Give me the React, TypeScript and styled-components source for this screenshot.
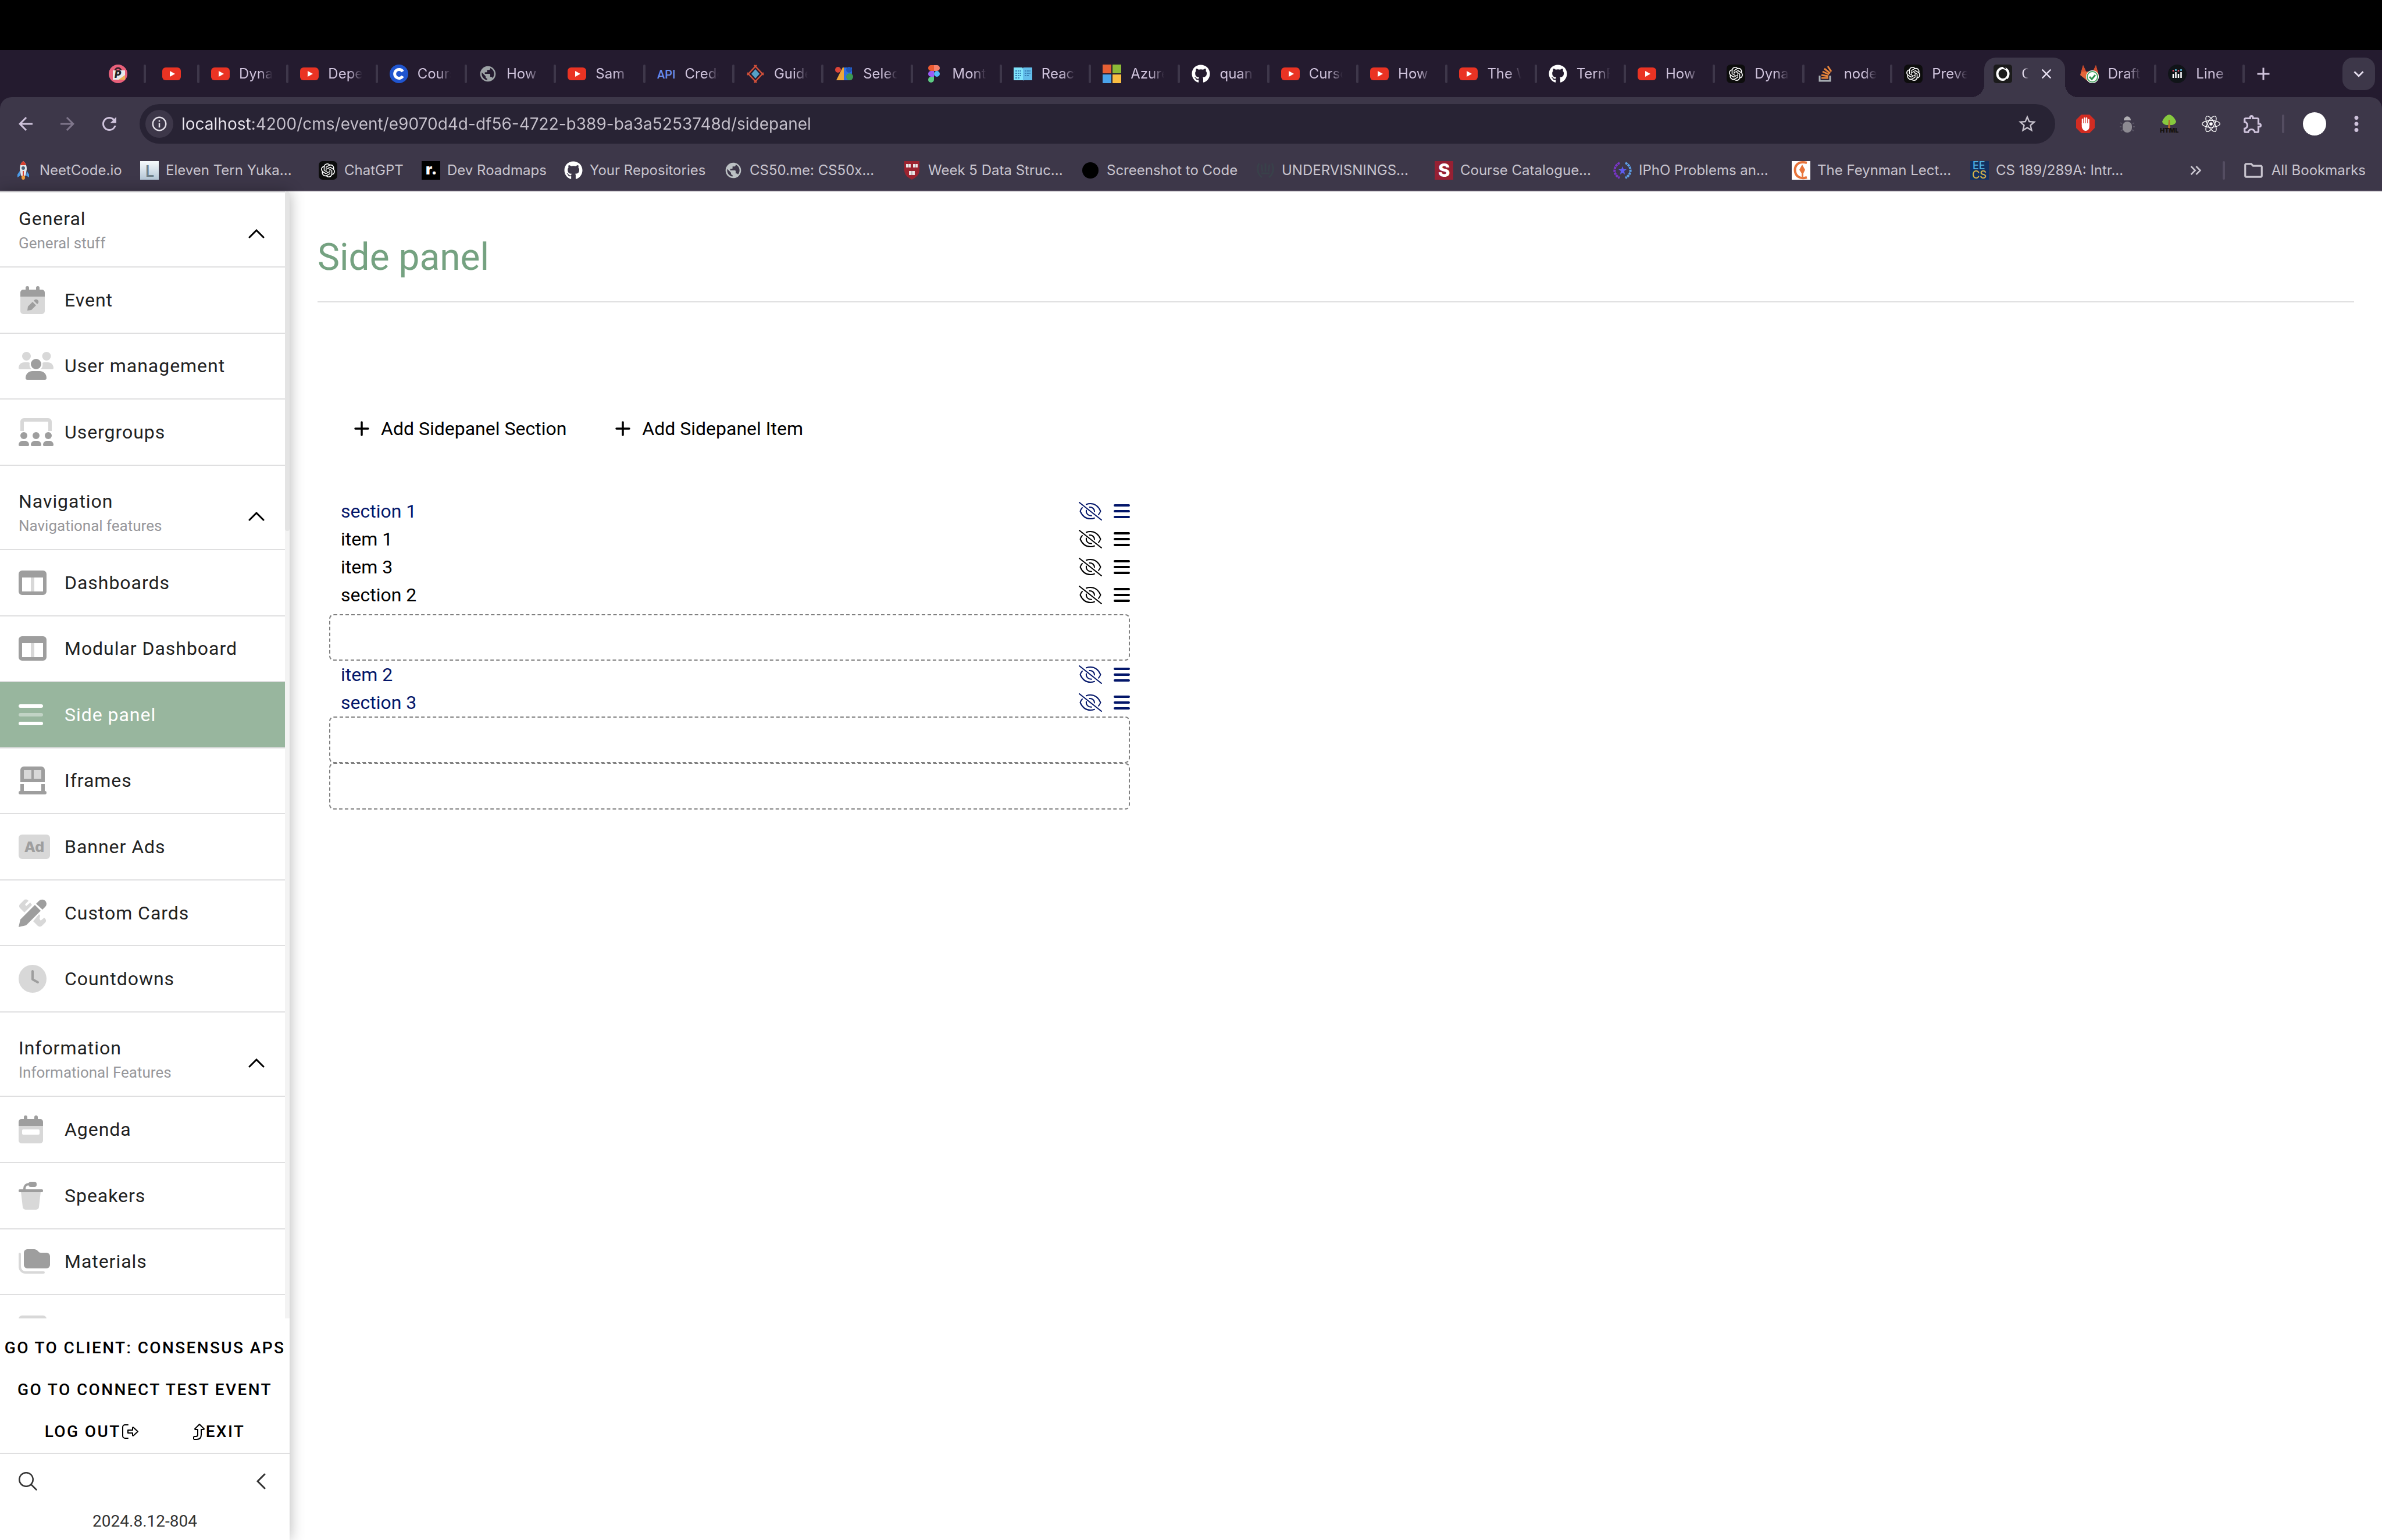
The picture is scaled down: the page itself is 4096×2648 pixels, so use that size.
import React from "react";
import styled, { createGlobalStyle, css } from "styled-components";
import { FaGithub, FaReact } from "react-icons/fa";
import { SiOpenai } from "react-icons/si";
import {
  MdPublic,
  MdArrowBack,
  MdArrowForward,
  MdRefresh,
  MdInfoOutline,
  MdStarBorder,
  MdOutlineExtension,
  MdMoreVert,
  MdClose,
  MdAdd,
  MdExpandMore,
  MdOutlineFolder,
  MdKeyboardDoubleArrowRight,
} from "react-icons/md";

const GlobalStyle = createGlobalStyle`
  * { box-sizing: border-box; }
  body { margin: 0; background: #fff; }
  button { border: 0; padding: 0; background: none; color: inherit; font: inherit; cursor: pointer; }
  a { color: inherit; text-decoration: none; }
  svg { display: block; flex: none; }
`;

const chromeFont = `Inter, "Liberation Sans", sans-serif`;
const appFont = `Roboto, "Liberation Sans", sans-serif`;

/* ---------- browser window ---------- */

const Window = styled.div`
  display: flex;
  flex-direction: column;
  height: 100vh;
  overflow: hidden;
`;

const MenuBar = styled.div`
  flex: none;
  height: 86px;
  background: #000;
`;

const TabStrip = styled.header`
  flex: none;
  display: flex;
  align-items: center;
  height: 81px;
  padding-left: 159px;
  padding-right: 12px;
  background: #241b2f;
  font: 400 24px/32px ${chromeFont};
  color: #cfc3dc;
`;

const tabSeparator = css`
  &::after {
    content: "";
    flex: none;
    width: 4px;
    height: 32px;
    border-radius: 2px;
    background: #3e374a;
  }
`;

const PinnedTab = styled.button`
  flex: none;
  display: flex;
  align-items: center;
  justify-content: space-between;
  width: 92px;
  padding-left: 28px;
  ${tabSeparator}
`;

const TabList = styled.div`
  flex: 1;
  min-width: 0;
  display: flex;
  align-items: center;
  align-self: stretch;
`;

const Tab = styled.button<{ $share: number; $separator: boolean }>`
  flex: ${(p) => p.$share} 1 0;
  min-width: 0;
  display: flex;
  align-items: center;
  padding-left: 20px;
  text-align: left;
  ${(p) => p.$separator && tabSeparator}
`;

const TabTitle = styled.span`
  flex: 1;
  min-width: 0;
  margin: 0 23px 0 16px;
  overflow: hidden;
  white-space: nowrap;
  mask-image: linear-gradient(90deg, #000 60%, transparent);
`;

const ActiveTab = styled.div`
  position: relative;
  flex: none;
  align-self: flex-end;
  display: flex;
  align-items: center;
  justify-content: space-between;
  width: 139px;
  height: 68px;
  margin: 0 6px;
  padding: 0 18px 12px 16px;
  border-radius: 20px 20px 0 0;
  background: #3d3749;
  color: #e6deef;
  &::before,
  &::after {
    content: "";
    position: absolute;
    bottom: 0;
    width: 22px;
    height: 22px;
  }
  &::before {
    right: 100%;
    background: radial-gradient(circle at 0 0, transparent 22px, #3d3749 22px);
  }
  &::after {
    left: 100%;
    background: radial-gradient(circle at 100% 0, transparent 22px, #3d3749 22px);
  }
`;

const ActiveTitle = styled.span`
  width: 12px;
  overflow: hidden;
  mask-image: linear-gradient(90deg, #000 30%, transparent);
`;

const NewTab = styled.button`
  flex: none;
  display: grid;
  place-items: center;
  width: 64px;
  height: 56px;
  margin-right: 104px;
`;

const TabSearch = styled.button`
  flex: none;
  display: grid;
  place-items: center;
  width: 56px;
  height: 56px;
  border-radius: 18px;
  background: #3d3749;
  color: #e6deef;
`;

const ToolbarArea = styled.div`
  background: #241b2f;
  flex: none;
`;

const Toolbar = styled.div`
  border-radius: 20px 20px 0 0;
  border-bottom: 2px solid #4d4658;
  background: #3d3749;
  font-family: ${chromeFont};
  color: #cfc3dc;
`;

const NavRow = styled.nav`
  display: flex;
  align-items: center;
  height: 92px;
  padding: 0 8px;
`;

const IconButton = styled.button<{ $faded?: boolean }>`
  flex: none;
  display: grid;
  place-items: center;
  width: 72px;
  height: 68px;
  opacity: ${(p) => (p.$faded ? 0.45 : 1)};
`;

const Omnibox = styled.form`
  flex: 1;
  display: flex;
  align-items: center;
  gap: 14px;
  height: 68px;
  margin: 0 16px;
  padding: 0 30px 0 10px;
  border-radius: 34px;
  background: #282334;
  color: #c6c1cc;
`;

const SiteInfo = styled.button`
  display: grid;
  place-items: center;
  width: 48px;
  height: 48px;
  border-radius: 24px;
  background: #3d3749;
  color: #e3dfe8;
`;

/* the host name is a shade brighter than the path after it */
const Address = styled.input`
  flex: 1;
  min-width: 0;
  border: 0;
  padding: 0;
  outline: 0;
  background: linear-gradient(90deg, #ebe7f0 121px, #c6c1cc 121px);
  background-clip: text;
  color: #c6c1cc;
  -webkit-text-fill-color: transparent;
  font: 400 28px/40px ${chromeFont};
`;

const Divider = styled.span`
  flex: none;
  width: 4px;
  height: 32px;
  border-radius: 2px;
  background: #544d61;
`;

const Avatar = styled.button`
  width: 40px;
  height: 40px;
  margin: 0 16px 0 32px;
  border-radius: 20px;
  background: #fff;
`;

const Profile = styled.div`
  display: flex;
  align-items: center;
  margin-left: 14px;
`;

const BookmarkBar = styled.div`
  display: flex;
  align-items: center;
  height: 68px;
  padding: 0 28px 0 24px;
  font-size: 24px;
  line-height: 32px;
  color: #c8c4ce;
`;

const Bookmark = styled.a<{ $width: number }>`
  flex: 0 0 ${(p) => p.$width}px;
  display: flex;
  align-items: center;
  gap: 12px;
  white-space: nowrap;
`;

const BookmarkEnd = styled.div`
  display: flex;
  align-items: center;
  gap: 30px;
  margin-left: auto;
`;

const AllBookmarks = styled.button`
  display: flex;
  align-items: center;
  gap: 12px;
`;

/* ---------- tab and bookmark pictures ---------- */

const YouTube = () => (
  <svg width="32" height="32" viewBox="0 0 32 32">
    <rect y="5" width="32" height="22" rx="6" fill="#ea3323" />
    <path d="M13 11l9 5-9 5z" fill="#fff" />
  </svg>
);

const ProductIcon = () => (
  <svg width="32" height="32" viewBox="0 0 32 32">
    <circle cx="16" cy="16" r="16" fill="#e8607a" />
    <path d="M11 11a5 5 0 0 1 10 0" fill="none" stroke="#33202a" strokeWidth="3" />
    <path d="M7 10h21v16H7z" fill="#e9e9e9" />
    <path d="M28 18v8H17z" fill="#efb054" />
    <text x="10" y="23" fontFamily="Inter, sans-serif" fontSize="17" fontWeight="900" fontStyle="italic" fill="#222">P</text>
  </svg>
);

const CourseraIcon = () => (
  <svg width="32" height="32" viewBox="0 0 32 32">
    <circle cx="16" cy="16" r="16" fill="#2055cf" />
    <path d="M22.500 12a7.500 7.500 0 1 0 0 8" fill="none" stroke="#fff" strokeWidth="5" />
  </svg>
);

const ApiIcon = () => (
  <svg width="32" height="32" viewBox="0 0 32 32">
    <text x="0" y="24" fontFamily="Roboto, sans-serif" fontSize="20" fontWeight="500" fill="#6a8cec">API</text>
  </svg>
);

const DiamondIcon = () => (
  <svg width="32" height="32" viewBox="0 0 32 32">
    <path d="M14 1l16 17M18 1L2 18M2 14l16 17M30 14L14 31" stroke="#d2503a" strokeWidth="2.500" />
    <path d="M16 8l7 8-7 8-7-8z" fill="#55a0c8" />
  </svg>
);

const AdsIcon = () => (
  <svg width="32" height="32" viewBox="0 0 32 32">
    <path d="M2 27L13 5h3v22z" fill="#eda63a" />
    <path d="M15 5h14v10l-4 12H15z" fill="#2f6fe0" />
    <circle cx="5" cy="9" r="5" fill="#db4437" />
    <circle cx="24" cy="9" r="5" fill="#1e55b8" />
    <circle cx="25" cy="21" r="6" fill="#3c9a53" />
  </svg>
);

const FigmaIcon = () => (
  <svg width="32" height="32" viewBox="0 0 32 32">
    <path d="M11 1h5v10h-5a5 5 0 0 1 0-10z" fill="#ec5b32" />
    <path d="M16 1h5a5 5 0 0 1 0 10h-5z" fill="#f5806b" />
    <path d="M11 11h5v10h-5a5 5 0 0 1 0-10z" fill="#9b5cf6" />
    <circle cx="21" cy="16" r="5" fill="#56b8f8" />
    <path d="M11 21h5v5a5 5 0 1 1-5-5z" fill="#5dcb83" />
  </svg>
);

const BookIcon = () => (
  <svg width="32" height="32" viewBox="0 0 32 32">
    <path d="M0 5h15l1 2v20H0z" fill="#7fe3fb" />
    <path d="M17 5h15v22H17l-1 1V6z" fill="#62bdea" />
    <path d="M3 11h10M3 15h10M3 19h10M3 23h8M19 11h10M19 15h10M19 19h8" stroke="#3b83b8" strokeWidth="2" strokeDasharray="3 1" />
  </svg>
);

const MicrosoftIcon = () => (
  <svg width="32" height="32" viewBox="0 0 32 32">
    <path d="M0 0h15v15H0z" fill="#e65f34" />
    <path d="M17 0h15v15H17z" fill="#8cb937" />
    <path d="M0 17h15v15H0z" fill="#4aa3ea" />
    <path d="M17 17h15v15H17z" fill="#f9bd42" />
  </svg>
);

const StackIcon = () => (
  <svg width="32" height="32" viewBox="0 0 32 32" fill="none" strokeWidth="3">
    <path d="M6 19v9h18v-9" stroke="#a9b0b5" />
    <path d="M9 23h12M9 18l12 2M11 12l11 5M14 7l10 8M20 3l6 9" stroke="#e8853b" />
  </svg>
);

const ChatBadge = styled.span`
  flex: none;
  display: grid;
  place-items: center;
  width: 32px;
  height: 32px;
  border-radius: 7px;
  background: #0d0d0d;
  color: #fff;
`;

const Chat = () => (
  <ChatBadge>
    <SiOpenai size={24} />
  </ChatBadge>
);

const ConsensusIcon = () => (
  <svg width="32" height="32" viewBox="0 0 32 32">
    <rect width="32" height="32" rx="5" fill="#1b1b1b" />
    <ellipse cx="16" cy="16" rx="9.500" ry="10" fill="none" stroke="#fff" strokeWidth="4" />
    <path d="M16 3l5 4M19 29l4-4" stroke="#1b1b1b" strokeWidth="2" />
  </svg>
);

const GitlabIcon = () => (
  <svg width="32" height="32" viewBox="0 0 32 32">
    <path d="M0 18L5 1l5 11h12l5-11 5 17-16 13z" fill="#e5663a" />
    <path d="M5 1l5 11H2zM27 1l-5 11h8z" fill="#d04a2c" />
    <circle cx="21" cy="21" r="11" fill="#fff" />
    <circle cx="21" cy="21" r="9" fill="#fff" stroke="#4aa564" strokeWidth="2" />
    <path d="M16 21l4 4 6-7" fill="none" stroke="#2f8f4d" strokeWidth="3" />
  </svg>
);

const BarsIcon = () => (
  <svg width="32" height="32" viewBox="0 0 32 32">
    <circle cx="16" cy="16" r="16" fill="#101418" />
    <path d="M9 16v7M13.500 13v10M18 16v7M22.500 13v10" stroke="#fff" strokeWidth="2.500" />
    <path d="M9 9v3M18 9v3" stroke="#d9536b" strokeWidth="2.500" />
    <path d="M13.500 8v3M22.500 8v3" stroke="#59b7d8" strokeWidth="2.500" />
  </svg>
);

const RocketIcon = () => (
  <svg width="32" height="32" viewBox="0 0 32 32">
    <path d="M10 17l-4 6v5l5-3zM22 17l4 6v5l-5-3z" fill="#4b9be8" />
    <ellipse cx="16" cy="28" rx="3" ry="4" fill="#f3a03b" />
    <path d="M16 0c5 4 6 9 6 14l-2 11h-8l-2-11c0-5 1-10 6-14z" fill="#e3e7ec" />
    <path d="M16 0c3 2 4 4 5 7H11c1-3 2-5 5-7zM15 17h2v9h-2z" fill="#d8412f" />
    <circle cx="16" cy="12" r="3" fill="#4a6378" />
  </svg>
);

const LetterL = () => (
  <svg width="32" height="32" viewBox="0 0 32 32">
    <defs>
      <linearGradient id="ice" x2="0" y2="1">
        <stop stopColor="#f6fafc" />
        <stop offset="1" stopColor="#b4c6d6" />
      </linearGradient>
    </defs>
    <rect width="32" height="32" fill="url(#ice)" />
    <text x="9" y="27" fontFamily="Inter, sans-serif" fontSize="27" fontWeight="600" fill="#6f7f88">L</text>
  </svg>
);

const RoadmapIcon = () => (
  <svg width="32" height="32" viewBox="0 0 32 32">
    <rect width="32" height="32" fill="#000" />
    <text x="7" y="23" fontFamily="Inter, sans-serif" fontSize="26" fontWeight="900" fill="#fff">r.</text>
  </svg>
);

const ShieldIcon = () => (
  <svg width="32" height="32" viewBox="0 0 32 32">
    <path d="M3 0h26v15c0 9-6 13-13 17C9 28 3 24 3 15z" fill="#9c2430" />
    <path d="M6 5h8v6H6zM18 5h8v6h-8zM11 17h10v7H11z" fill="#ece6e6" />
    <path d="M10 5v6M22 5v6M16 17v7" stroke="#8b8080" strokeWidth="1" />
  </svg>
);

const BlackDot = () => (
  <svg width="32" height="32" viewBox="0 0 32 32">
    <circle cx="16" cy="16" r="14" fill="#000" />
  </svg>
);

const DarkCrest = () => (
  <svg width="32" height="32" viewBox="0 0 32 32" fill="none" stroke="#39414a" strokeWidth="3">
    <path d="M5 4c-4 8-3 18 5 24M27 4c4 8 3 18-5 24M9 6l2 12M16 4v14M23 6l-2 12M9 21h14" />
  </svg>
);

const LetterS = () => (
  <svg width="32" height="32" viewBox="0 0 32 32">
    <rect width="32" height="32" fill="#972033" />
    <text x="6" y="27" fontFamily="Inter, sans-serif" fontSize="31" fontWeight="800" fill="#fff">S</text>
  </svg>
);

const LaurelIcon = () => (
  <svg width="32" height="32" viewBox="0 0 32 32">
    <path d="M11 3C1 8-2 22 11 29" fill="none" stroke="#7a35c8" strokeWidth="4" strokeDasharray="4 1" />
    <path d="M21 3c10 5 13 19 0 26" fill="none" stroke="#5d9fe6" strokeWidth="4" strokeDasharray="4 1" />
    <path d="M16 9l2 5h5l-4 3 1 6-4-3-4 3 1-6-4-3h5z" fill="#5e5cf0" />
  </svg>
);

const FeynmanIcon = () => (
  <svg width="32" height="32" viewBox="0 0 32 32">
    <rect width="32" height="32" fill="#fff" />
    <path d="M26 3C10-1 4 9 6 19c2 9 11 12 20 9" fill="none" stroke="#e8743b" strokeWidth="4" />
    <path d="M18 6l5 9-3 6v6h-3v-6l-4-6z" fill="#e8743b" />
  </svg>
);

const EecsIcon = () => (
  <svg width="32" height="32" viewBox="0 0 32 32">
    <rect width="32" height="32" fill="#12305f" />
    <text x="4" y="14" fontFamily="Inter, sans-serif" fontSize="18" fontWeight="500" fill="#4fb3e2">EE</text>
    <text x="3" y="30" fontFamily="Inter, sans-serif" fontSize="18" fontWeight="500" fill="#d8b54a">CS</text>
  </svg>
);

const StopHand = () => (
  <svg width="32" height="32" viewBox="0 0 32 32">
    <path d="M9 0h14l9 9v14l-9 9H9l-9-9V9z" fill="#d22c22" />
    <path d="M11 17V8M14.500 16V6M18 16V6M21.500 18V9" stroke="#fff" strokeWidth="2.500" strokeLinecap="round" />
    <path d="M9.750 15h13v6c0 4-3 7-6.500 7s-6.500-4-6.500-8z" fill="#fff" />
  </svg>
);

const BugIcon = () => (
  <svg width="32" height="32" viewBox="0 0 32 32">
    <path d="M10 10c0-9 12-9 12 0z" fill="#b0aeb3" />
    <rect x="8" y="12" width="16" height="19" rx="8" fill="#8d8a92" />
    <path d="M4 14l3 2M28 14l-3 2M3 21h3M29 21h-3M5 28l3-2M27 28l-3-2" stroke="#5a5565" strokeWidth="2" />
  </svg>
);

const TreeIcon = () => (
  <svg width="32" height="32" viewBox="0 0 32 32">
    <path d="M16 0c5 1 9 5 12 12-1 4-5 6-9 6h-6c-4 0-8-2-9-6C7 5 11 1 16 0z" fill="#86c93e" />
    <path d="M15 9h2l1 15h-4z" fill="#b06c2c" />
    <text x="0" y="31" fontFamily="Inter, sans-serif" fontSize="11" fontWeight="900" fill="#16120e">HTML</text>
  </svg>
);

/* ---------- application ---------- */

const Page = styled.div`
  flex: 1;
  min-height: 0;
  display: flex;
  font: 400 32px/40px ${appFont};
  color: #000;
  background: #fff;
`;

const Sidebar = styled.aside`
  flex: none;
  display: flex;
  flex-direction: column;
  width: 498px;
  background: #fff;
  box-shadow: 0 0 24px rgba(0, 0, 0, 0.3);
`;

const ScrollArea = styled.div`
  flex: 1;
  min-height: 0;
  display: flex;
`;

const Menu = styled.nav`
  flex: 1;
  overflow: hidden;
  border-top: 2px solid #dfdfe0;
  letter-spacing: 0.03em;
  color: #212121;
`;

const ScrollTrack = styled.div`
  width: 8px;
  background: #f3f3f3;
`;

const ScrollThumb = styled.div`
  height: 584px;
  border-radius: 4px;
  background: #e4e4e4;
`;

const GroupHeader = styled.button<{ $compact: boolean }>`
  display: flex;
  align-items: flex-end;
  justify-content: space-between;
  width: 100%;
  height: ${(p) => (p.$compact ? 129 : 145)}px;
  padding: 0 35px 20px 32px;
  border-bottom: 2px solid #dfdfe0;
  text-align: left;
  letter-spacing: inherit;
`;

const GroupNames = styled.span`
  display: grid;
  gap: 2px;
`;

const GroupNote = styled.span`
  font-size: 26px;
  letter-spacing: 0;
  color: #97979b;
`;

const ChevronBox = styled.span`
  display: grid;
  place-items: center;
  height: 72px;
  color: #000;
`;

const GroupItems = styled.div<{ $height: number }>`
  display: grid;
  grid-auto-rows: 1fr;
  height: ${(p) => p.$height}px;
`;

const MenuLink = styled.a<{ $active?: boolean }>`
  display: flex;
  align-items: center;
  padding-left: 32px;
  border-bottom: 2px solid #dfdfe0;
  --dark: ${(p) => (p.$active ? "#fff" : "#9e9e9e")};
  --light: ${(p) => (p.$active ? "rgba(255,255,255,.4)" : "#d8d8d8")};
  background: ${(p) => (p.$active ? "#98b69e" : "#fff")};
  color: ${(p) => (p.$active ? "#fff" : "inherit")};
`;

const MenuIcon = styled.span<{ $centered?: boolean }>`
  flex: none;
  display: flex;
  width: 79px;
  padding-left: ${(p) => (p.$centered ? 3 : 0)}px;
`;

const SidebarFooter = styled.div`
  flex: none;
  padding: 15px 0 10px;
`;

const FooterRow = styled.div`
  display: flex;
  align-items: center;
  justify-content: center;
  gap: 94px;
  height: 72px;
`;

const FooterButton = styled.button`
  display: flex;
  align-items: center;
  gap: 2px;
  font-size: 28px;
  font-weight: 500;
  line-height: 40px;
  letter-spacing: 0.085em;
  text-transform: uppercase;
  white-space: nowrap;
`;

const SearchRow = styled.div`
  display: flex;
  align-items: center;
  justify-content: space-between;
  height: 96px;
  padding: 0 41px 0 32px;
  border-top: 2px solid #dfdfe0;
  color: #333;
`;

const Version = styled.div`
  font-size: 28px;
  line-height: 44px;
  text-align: center;
  color: #333;
`;

const Main = styled.main`
  flex: 1;
  min-width: 0;
  padding: 74px 48px 0;
`;

const Title = styled.h1`
  margin: 0;
  padding-bottom: 35px;
  border-bottom: 2px solid #dfdfe0;
  font-size: 64px;
  font-weight: 400;
  line-height: 80px;
  color: #75a281;
`;

const Actions = styled.div`
  display: flex;
  gap: 20px;
  margin-top: 197px;
  padding-left: 31px;
`;

const ActionButton = styled.button`
  display: flex;
  align-items: center;
  gap: 20px;
  padding: 0 32px;
`;

const PanelList = styled.section`
  display: flex;
  flex-direction: column;
  max-width: 1377px;
  margin: 98px 0 0 20px;
`;

const Entry = styled.div<{ $blue: boolean }>`
  display: flex;
  align-items: center;
  gap: 20px;
  height: 48px;
  padding-left: 20px;
  color: ${(p) => (p.$blue ? "#03166a" : "#000")};
`;

const EntryName = styled.span`
  flex: 1;
`;

const DropZone = styled.div<{ $spaced?: boolean }>`
  height: 80px;
  margin-top: ${(p) => (p.$spaced ? 9 : 0)}px;
  border: 2px dashed #808080;
  border-radius: 8px;
`;

/* duotone menu icons, one unit per pixel */

const D = "var(--dark)";
const L = "var(--light)";

const CalendarEdit = () => (
  <svg width="42" height="48" viewBox="0 0 42 48">
    <path d="M0 18h42v25a5 5 0 0 1-5 5H5a5 5 0 0 1-5-5z" fill={L} />
    <path d="M0 18v-7a5 5 0 0 1 5-5h4V3a3 3 0 0 1 6 0v3h12V3a3 3 0 0 1 6 0v3h4a5 5 0 0 1 5 5v7z" fill={D} />
    <path d="M12 42l1-7 8-8 6 6-8 8zM23 25l1-1a4 4 0 0 1 6 6l-1 1z" fill={D} />
  </svg>
);

const Users = () => (
  <svg width="60" height="48" viewBox="0 0 60 48">
    <g fill={L}>
      <circle cx="13.500" cy="7.500" r="7.500" />
      <circle cx="48" cy="7.500" r="7.500" />
      <path d="M2 30a2 2 0 0 1-2-2c0-6 4-10 10-10h5c2 0 3 0 4 1-1 4 0 8 3 11zM58 30a2 2 0 0 0 2-2c0-6-4-10-10-10h-5c-2 0-3 0-4 1 1 4 0 8-3 11z" />
    </g>
    <circle cx="30" cy="21" r="9" fill={D} />
    <path d="M12 45c0-7 5-12 12-12h12c7 0 12 5 12 12a3 3 0 0 1-3 3H15a3 3 0 0 1-3-3z" fill={D} />
  </svg>
);

const ScreenUsers = () => (
  <svg width="60" height="48" viewBox="0 0 60 48">
    <path d="M6 22V6a3 3 0 0 1 3-3h42a3 3 0 0 1 3 3v16" fill="none" stroke={L} strokeWidth="6" />
    {[9, 30, 51].map((x) => (
      <g key={x} fill={D}>
        <circle cx={x} cy="30" r="6" />
        <path d={`M${x - 9} 46c0-4 3-7 7-7h4c4 0 7 3 7 7a2 2 0 0 1-2 2h-14a2 2 0 0 1-2-2z`} />
      </g>
    ))}
  </svg>
);

const Columns = () => (
  <svg width="48" height="42" viewBox="0 0 48 42">
    <path d="M21 10h6v28h-6z" fill={L} />
    <path d="M6 0h36a6 6 0 0 1 6 6v30a6 6 0 0 1-6 6H6a6 6 0 0 1-6-6V6a6 6 0 0 1 6-6zM6 12v24h36V12z" fillRule="evenodd" fill={D} />
  </svg>
);

const Lines = () => (
  <svg width="42" height="36" viewBox="0 0 42 36">
    <rect width="42" height="6" rx="3" fill={D} />
    <rect y="15" width="42" height="6" rx="3" fill={L} />
    <rect y="30" width="42" height="6" rx="3" fill={D} />
  </svg>
);

const Frame = () => (
  <svg width="48" height="48" viewBox="0 0 48 48">
    <path d="M9 6h30v15H9z" fill={L} />
    <path d="M9 0h30a6 6 0 0 1 6 6v21H3V6a6 6 0 0 1 6-6zM9 6v15h13V6zM26 6v15h13V6z" fillRule="evenodd" fill={D} />
    <path d="M3 30h6v12h30V30h6v12a3 3 0 0 1 0 6H3a3 3 0 0 1 0-6z" fill={D} />
  </svg>
);

const Ad = () => (
  <svg width="54" height="42" viewBox="0 0 54 42">
    <rect width="54" height="42" rx="6" fill={L} />
    <text x="27" y="30" textAnchor="middle" fontFamily="Inter, sans-serif" fontSize="25" fontWeight="800" letterSpacing="0" fill={D}>Ad</text>
  </svg>
);

const PencilRuler = () => (
  <svg width="48" height="48" viewBox="0 0 48 48">
    <path d="M10 23L2 15a5 5 0 0 1 0-6l7-7a5 5 0 0 1 7 0l1 1-6 6 2 3 7-6 3 4zM25 38l10-12 2 2-1 6 2 3 6-5 2 2a5 5 0 0 1 0 6l-6 6a5 5 0 0 1-7 0z" fill={L} />
    <path d="M0 48l3-13L28 10l10 10-25 25zM30 8l5-5a8 8 0 0 1 11 0 8 8 0 0 1 0 10l-5 5z" fill={D} />
  </svg>
);

const Clock = () => (
  <svg width="48" height="48" viewBox="0 0 48 48">
    <circle cx="24" cy="24" r="24" fill={L} />
    <path d="M24 11v14l9 5" fill="none" stroke={D} strokeWidth="4" strokeLinecap="round" strokeLinejoin="round" />
  </svg>
);

const Calendar = () => (
  <svg width="42" height="48" viewBox="0 0 42 48">
    <path d="M0 18h42v25a5 5 0 0 1-5 5H5a5 5 0 0 1-5-5zM8 24a2 2 0 0 0-2 2v5a2 2 0 0 0 2 2h26a2 2 0 0 0 2-2v-5a2 2 0 0 0-2-2z" fillRule="evenodd" fill={L} />
    <path d="M0 18v-7a5 5 0 0 1 5-5h4V3a3 3 0 0 1 6 0v3h12V3a3 3 0 0 1 6 0v3h4a5 5 0 0 1 5 5v7z" fill={D} />
  </svg>
);

const Podium = () => (
  <svg width="42" height="48" viewBox="0 0 42 48">
    <path d="M4 17h34l-3 26a5 5 0 0 1-5 5H12a5 5 0 0 1-5-5z" fill={L} />
    <path d="M10 15v-3c0-5 3-8 8-8h3" fill="none" stroke={D} strokeWidth="4" />
    <rect x="17" width="14" height="9" rx="4" fill={D} />
    <rect y="13" width="42" height="5" rx="2" fill={D} />
  </svg>
);

const Folders = () => (
  <svg width="54" height="42" viewBox="0 0 54 42">
    <path d="M2 8v22a10 10 0 0 0 10 10h31" fill="none" stroke={L} strokeWidth="4" strokeLinecap="round" />
    <path d="M15 0h12c2 0 4 1 5 2l2 2c1 1 2 2 4 2h10a6 6 0 0 1 6 6v15a6 6 0 0 1-6 6H15a6 6 0 0 1-6-6V6a6 6 0 0 1 6-6z" fill={D} />
  </svg>
);

const Poll = () => (
  <svg width="48" height="42" viewBox="0 0 48 42">
    <rect width="48" height="42" rx="6" fill={L} />
  </svg>
);

const ChevronUp = () => (
  <svg width="28" height="16" viewBox="0 0 28 16">
    <path d="M2 14L14 2l12 12" fill="none" stroke="currentColor" strokeWidth="3" strokeLinecap="round" />
  </svg>
);

const ChevronLeft = () => (
  <svg width="16" height="28" viewBox="0 0 16 28">
    <path d="M14 2L2 14l12 12" fill="none" stroke="currentColor" strokeWidth="3" strokeLinecap="round" />
  </svg>
);

const Search = () => (
  <svg width="32" height="32" viewBox="0 0 32 32" fill="none" stroke="currentColor" strokeWidth="2.500" strokeLinecap="round">
    <circle cx="13" cy="13" r="11.750" />
    <path d="M21.500 21.500l9 9" />
  </svg>
);

const LogoutIcon = () => (
  <svg width="28" height="28" viewBox="0 0 28 28" fill="none" stroke="currentColor" strokeWidth="2" strokeLinecap="round" strokeLinejoin="round">
    <path d="M10 2H5a4 4 0 0 0-4 4v15a4 4 0 0 0 4 4h5" />
    <path d="M10 11h8V7c0-1 1-1 2 0l7 6.500-7 6.500c-1 1-2 1-2 0v-4h-8z" />
  </svg>
);

const LevelUp = () => (
  <svg width="20" height="28" viewBox="0 0 20 28" fill="none" stroke="currentColor" strokeWidth="2" strokeLinejoin="round">
    <path d="M11 1l8 8c0 1-1 1-1 1h-4v9c0 5-3 8-8 8H2l-1-1v-3l1-1h3c2 0 3-1 3-3v-9H4s-1 0-1-1z" />
  </svg>
);

const Plus = () => (
  <svg width="26" height="26" viewBox="0 0 26 26" stroke="currentColor" strokeWidth="3.500" strokeLinecap="round">
    <path d="M13 2v22M2 13h22" />
  </svg>
);

const EyeSlash = () => (
  <svg width="40" height="32" viewBox="0 0 40 32" fill="none" stroke="currentColor" strokeWidth="2" strokeLinecap="round">
    <path d="M1 1l38 30" />
    <path d="M6 10c-2 2-3 4-3.500 6C6 24 12 29 20 29c2.500 0 5-.5 7-1.300" />
    <path d="M13 4.300C15 3.500 17.500 3 20 3c8 0 14 5 17.500 13-.8 2-2 4-3.500 5.800" />
    <path d="M13 14.500c-1 5.500 3.500 9.800 9 9.300" />
    <path d="M18.500 9c4.500-.5 8.500 3 8.500 7.500" />
  </svg>
);

const Handle = () => (
  <svg width="28" height="24" viewBox="0 0 28 24" stroke="currentColor" strokeWidth="4" strokeLinecap="round">
    <path d="M2 2h24M2 12h24M2 22h24" />
  </svg>
);

/* ---------- data ---------- */

const globe = <MdPublic size={32} color="#9da3a6" />;
const github = <FaGithub size={32} color="#fff" />;

const tabs: [string, React.ReactNode][] = [
  ["Dynam", <YouTube />],
  ["Depe", <YouTube />],
  ["Cours", <CourseraIcon />],
  ["How t", globe],
  ["Sam A", <YouTube />],
  ["Crede", <ApiIcon />],
  ["Guide", <DiamondIcon />],
  ["Selec", <AdsIcon />],
  ["Mont", <FigmaIcon />],
  ["React", <BookIcon />],
  ["Azure", <MicrosoftIcon />],
  ["quant", github],
  ["Curso", <YouTube />],
  ["How '", <YouTube />],
  ["The W", <YouTube />],
  ["TernF", github],
  ["How C", <YouTube />],
  ["Dynar", <Chat />],
  ["node", <StackIcon />],
  ["Preve", <Chat />],
];

const lateTabs: [string, React.ReactNode][] = [
  ["Draft", <GitlabIcon />],
  ["Line c", <BarsIcon />],
];

const bookmarks: [string, number, React.ReactNode][] = [
  ["NeetCode.io", 217, <RocketIcon />],
  ["Eleven Tern Yuka...", 307, <LetterL />],
  ["ChatGPT", 177, <Chat />],
  ["Dev Roadmaps", 245, <RoadmapIcon />],
  ["Your Repositories", 275, github],
  ["CS50.me: CS50x...", 307, <MdPublic size={32} color="#bcc1c4" />],
  ["Week 5 Data Struc...", 307, <ShieldIcon />],
  ["Screenshot to Code", 301, <BlackDot />],
  ["UNDERVISNINGS...", 307, <DarkCrest />],
  ["Course Catalogue...", 307, <LetterS />],
  ["IPhO Problems an...", 307, <LaurelIcon />],
  ["The Feynman Lect...", 307, <FeynmanIcon />],
  ["CS 189/289A: Intr...", 307, <EecsIcon />],
];

type Item = { name: string; icon: React.ReactNode; centered?: boolean; active?: boolean };
type Group = { name: string; note: string; height: number; items: Item[] };

const groups: Group[] = [
  {
    name: "General",
    note: "General stuff",
    height: 341,
    items: [
      { name: "Event", icon: <CalendarEdit />, centered: true },
      { name: "User management", icon: <Users /> },
      { name: "Usergroups", icon: <ScreenUsers /> },
    ],
  },
  {
    name: "Navigation",
    note: "Navigational features",
    height: 795,
    items: [
      { name: "Dashboards", icon: <Columns /> },
      { name: "Modular Dashboard", icon: <Columns /> },
      { name: "Side panel", icon: <Lines />, active: true },
      { name: "Iframes", icon: <Frame /> },
      { name: "Banner Ads", icon: <Ad /> },
      { name: "Custom Cards", icon: <PencilRuler /> },
      { name: "Countdowns", icon: <Clock /> },
    ],
  },
  {
    name: "Information",
    note: "Informational Features",
    height: 455,
    items: [
      { name: "Agenda", icon: <Calendar /> },
      { name: "Speakers", icon: <Podium /> },
      { name: "Materials", icon: <Folders /> },
      { name: "", icon: <Poll /> },
    ],
  },
];

type Line = { name?: string; blue?: boolean; spaced?: boolean };

const lines: Line[] = [
  { name: "section 1", blue: true },
  { name: "item 1" },
  { name: "item 3" },
  { name: "section 2" },
  { spaced: true },
  { name: "item 2", blue: true },
  { name: "section 3", blue: true },
  {},
  {},
];

/* ---------- views ---------- */

const Browser = () => (
  <>
    <MenuBar />
    <TabStrip>
      <PinnedTab aria-label="Pinned tab"><ProductIcon /></PinnedTab>
      <PinnedTab aria-label="Pinned video"><YouTube /></PinnedTab>
      <TabList>
        {tabs.map(([title, icon], i) => (
          <Tab key={i} $share={i < 18 ? 154 : 152} $separator={i < 19}>
            {icon}
            <TabTitle>{title}</TabTitle>
          </Tab>
        ))}
        <ActiveTab>
          <ConsensusIcon />
          <ActiveTitle>C</ActiveTitle>
          <button aria-label="Close tab"><MdClose size={28} /></button>
        </ActiveTab>
        {lateTabs.map(([title, icon]) => (
          <Tab key={title} $share={152} $separator>
            {icon}
            <TabTitle>{title}</TabTitle>
          </Tab>
        ))}
      </TabList>
      <NewTab aria-label="New tab"><MdAdd size={36} /></NewTab>
      <TabSearch aria-label="Search tabs"><MdExpandMore size={34} /></TabSearch>
    </TabStrip>
    <ToolbarArea>
      <Toolbar>
        <NavRow>
          <IconButton aria-label="Back"><MdArrowBack size={36} /></IconButton>
          <IconButton aria-label="Forward" $faded><MdArrowForward size={36} /></IconButton>
          <IconButton aria-label="Reload"><MdRefresh size={36} /></IconButton>
          <Omnibox>
            <SiteInfo type="button" aria-label="Site information"><MdInfoOutline size={30} /></SiteInfo>
            <Address
              aria-label="Address"
              defaultValue="localhost:4200/cms/event/e9070d4d-df56-4722-b389-ba3a5253748d/sidepanel"
            />
            <button type="button" aria-label="Bookmark this page"><MdStarBorder size={36} /></button>
          </Omnibox>
          <IconButton aria-label="Ad blocker"><StopHand /></IconButton>
          <IconButton aria-label="Debugger"><BugIcon /></IconButton>
          <IconButton aria-label="HTML tree"><TreeIcon /></IconButton>
          <IconButton aria-label="React tools"><FaReact size={32} color="#fff" /></IconButton>
          <IconButton aria-label="Extensions"><MdOutlineExtension size={38} /></IconButton>
          <Profile>
            <Divider />
            <Avatar aria-label="Profile" />
            <IconButton aria-label="Menu"><MdMoreVert size={42} /></IconButton>
          </Profile>
        </NavRow>
        <BookmarkBar>
          {bookmarks.map(([title, width, icon]) => (
            <Bookmark key={title} href="#" $width={width}>
              {icon}
              {title}
            </Bookmark>
          ))}
          <BookmarkEnd>
            <button aria-label="More bookmarks"><MdKeyboardDoubleArrowRight size={32} /></button>
            <Divider />
            <AllBookmarks><MdOutlineFolder size={38} />All Bookmarks</AllBookmarks>
          </BookmarkEnd>
        </BookmarkBar>
      </Toolbar>
    </ToolbarArea>
  </>
);

const SideMenu = () => (
  <Sidebar>
    <ScrollArea>
      <Menu>
        {groups.map((group, i) => (
          <React.Fragment key={group.name}>
            <GroupHeader $compact={i === 0}>
              <GroupNames>
                <span>{group.name}</span>
                <GroupNote>{group.note}</GroupNote>
              </GroupNames>
              <ChevronBox><ChevronUp /></ChevronBox>
            </GroupHeader>
            <GroupItems $height={group.height}>
              {group.items.map((item) => (
                <MenuLink key={item.name} href="#" $active={item.active}>
                  <MenuIcon $centered={item.centered}>{item.icon}</MenuIcon>
                  {item.name}
                </MenuLink>
              ))}
            </GroupItems>
          </React.Fragment>
        ))}
      </Menu>
      <ScrollTrack><ScrollThumb /></ScrollTrack>
    </ScrollArea>
    <SidebarFooter>
      <FooterRow><FooterButton>Go to client: Consensus ApS</FooterButton></FooterRow>
      <FooterRow><FooterButton>Go to Connect test event</FooterButton></FooterRow>
      <FooterRow>
        <FooterButton>Log out<LogoutIcon /></FooterButton>
        <FooterButton><LevelUp />Exit</FooterButton>
      </FooterRow>
      <SearchRow>
        <button aria-label="Search"><Search /></button>
        <button aria-label="Collapse menu"><ChevronLeft /></button>
      </SearchRow>
      <Version>2024.8.12-804</Version>
    </SidebarFooter>
  </Sidebar>
);

const Content = () => (
  <Main>
    <Title>Side panel</Title>
    <Actions>
      <ActionButton><Plus />Add Sidepanel Section</ActionButton>
      <ActionButton><Plus />Add Sidepanel Item</ActionButton>
    </Actions>
    <PanelList>
      {lines.map((line, i) =>
        line.name ? (
          <Entry key={i} $blue={!!line.blue}>
            <EntryName>{line.name}</EntryName>
            <button aria-label={`Hide ${line.name}`}><EyeSlash /></button>
            <button aria-label={`Move ${line.name}`}><Handle /></button>
          </Entry>
        ) : (
          <DropZone key={i} $spaced={line.spaced} />
        )
      )}
    </PanelList>
  </Main>
);

export default function App() {
  return (
    <Window>
      <GlobalStyle />
      <Browser />
      <Page>
        <SideMenu />
        <Content />
      </Page>
    </Window>
  );
}
